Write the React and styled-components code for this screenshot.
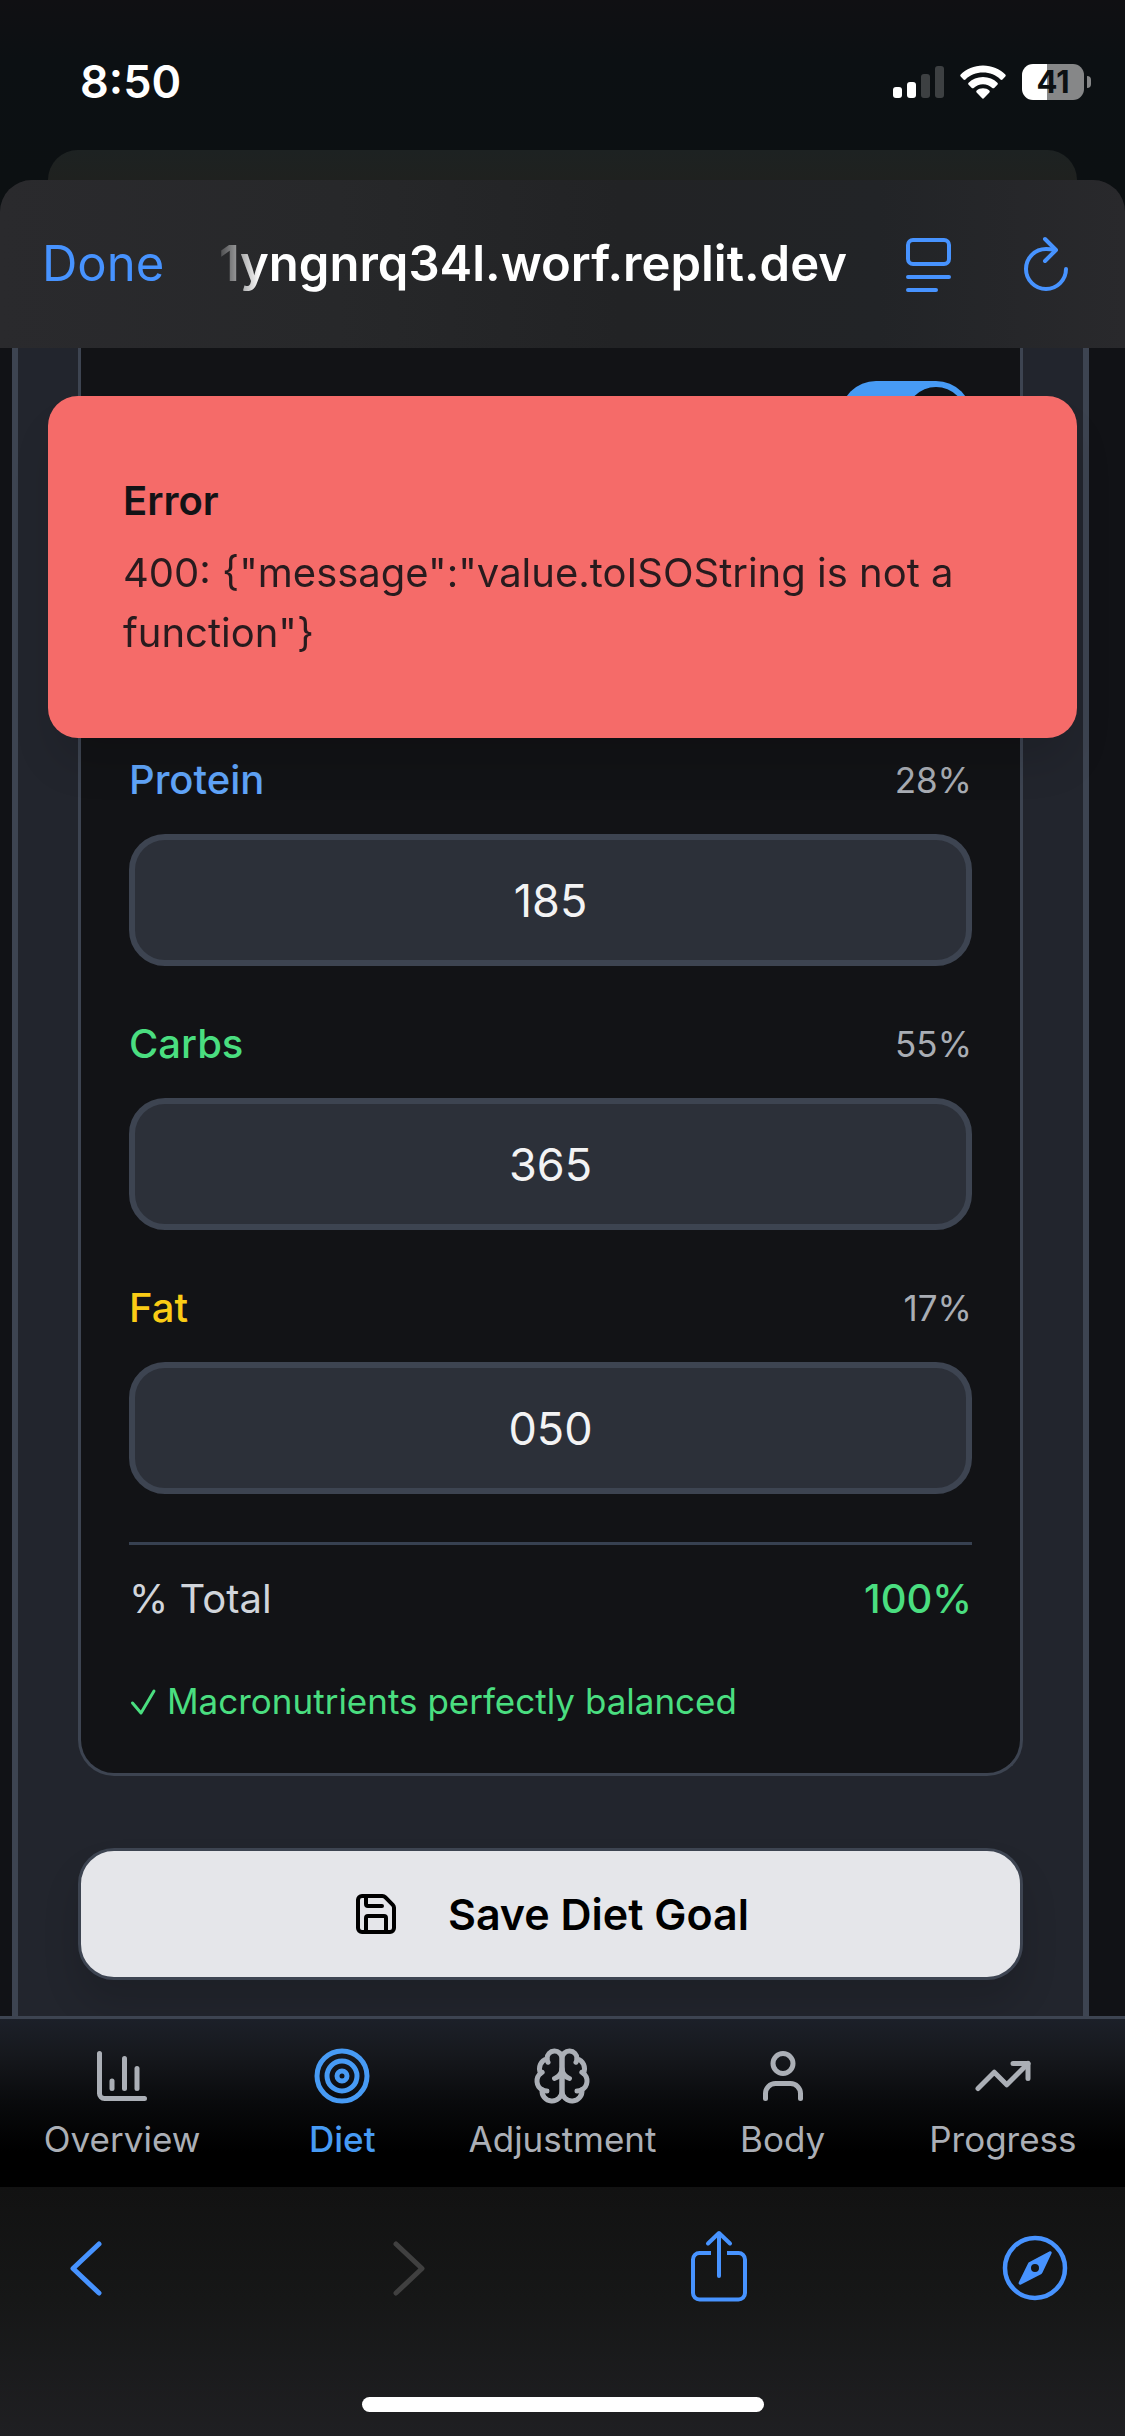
import React, { useState } from "react";
import styled, { createGlobalStyle } from "styled-components";
import { ChartColumn, Save, Target, TrendingUp, User } from "lucide-react";

const GlobalStyle = createGlobalStyle`
  *, *::before, *::after { box-sizing: border-box; }
  html, body { margin: 0; padding: 0; background: #0c1012; }
  body { font-family: Inter, "Liberation Sans", sans-serif; }
  button, input { font: inherit; margin: 0; }
`;

const Screen = styled.div`
  display: flex;
  flex-direction: column;
  min-height: 100vh;
  background: linear-gradient(#101013 0, #0c1013 60px, #0c1012 180px);
`;

const StatusBar = styled.header`
  display: flex;
  align-items: center;
  justify-content: space-between;
  height: 150px;
  padding: 14px 34px 0 80px;
  color: #fff;
`;

const Clock = styled.time`
  font-size: 45px;
  font-weight: 600;
  line-height: 60px;
`;

const StatusIcons = styled.div`
  display: flex;
  align-items: center;
  gap: 16px;
`;

const Battery = styled.div`
  display: flex;
  align-items: center;
  gap: 3px;

  &::after {
    content: "";
    width: 4px;
    height: 12px;
    border-radius: 0 4px 4px 0;
    background: #868788;
  }
`;

const BatteryLevel = styled.span`
  width: 62px;
  height: 36px;
  border-radius: 11px;
  background: linear-gradient(90deg, #fff 40%, #868788 40%);
  color: #0c1012;
  font-size: 31px;
  font-weight: 700;
  line-height: 36px;
  text-align: center;
`;

const BackSheet = styled.div`
  height: 30px;
  margin: 0 48px;
  border-radius: 30px 30px 0 0;
  background: linear-gradient(#1d2222, #1f211f);
`;

const Sheet = styled.section`
  display: flex;
  flex: 1;
  flex-direction: column;
  overflow: hidden;
  border-radius: 32px 32px 0 0;
  background: #111216;
`;

const AddressBar = styled.div`
  display: flex;
  align-items: center;
  height: 168px;
  padding: 0 56px 0 42px;
  background: linear-gradient(90deg, #2a2a2d 0%, #27282a 30%, #222325 55%, #222427 78%, #29292c 100%);
`;

const BarButton = styled.button`
  display: flex;
  align-items: center;
  justify-content: center;
  padding: 0;
  border: 0;
  background: none;
  color: ${(p) => (p.disabled ? "#404040" : "#4793ff")};
`;

const DoneButton = styled(BarButton)`
  font-size: 49px;
  line-height: 60px;
`;

const Address = styled.h1`
  flex: 1;
  margin: 0 0 0 48px;
  color: #fff;
  font-size: 49px;
  font-weight: 600;
  line-height: 60px;
  text-align: right;
  white-space: nowrap;
  mask-image: linear-gradient(90deg, transparent 0, #000 48px);
`;

const BarActions = styled.div`
  display: flex;
  gap: 72px;
  margin-left: 58px;
`;

const Viewport = styled.main`
  position: relative;
  flex: 1;
  overflow: hidden;
  padding: 0 36px 0 12px;
`;

const Panel = styled.form`
  display: flex;
  flex-direction: column;
  gap: 72px;
  height: 100%;
  padding: 0 60px 36px;
  border: solid #3d4451;
  border-width: 0 6px;
  background: #22252d;
`;

const Card = styled.section`
  display: flex;
  flex-direction: column;
  gap: 48px;
  padding: 33px 48px 48px;
  border: 3px solid #3d4451;
  border-top: 0;
  border-radius: 0 0 36px 36px;
  background: #121316;
`;

const SwitchRow = styled.div`
  display: flex;
  justify-content: flex-end;
  height: 321px;
`;

const Switch = styled.input`
  appearance: none;
  width: 132px;
  height: 72px;
  padding: 6px;
  border-radius: 36px;
  background: #479bf5;

  &::before {
    content: "";
    display: block;
    width: 60px;
    height: 60px;
    margin-left: auto;
    border-radius: 50%;
    background: #121316;
  }
`;

const Field = styled.div`
  display: flex;
  flex-direction: column;
  gap: 24px;
`;

const Row = styled.div`
  display: flex;
  align-items: center;
  justify-content: space-between;
  line-height: 60px;
`;

const MacroLabel = styled.label`
  color: ${(p) => p.$color};
  font-size: 40px;
  font-weight: 500;
`;

const Percent = styled.span`
  color: #a9adb4;
  font-size: 35px;
`;

const MacroInput = styled.input`
  width: 100%;
  height: 132px;
  padding: 0 36px;
  border: 6px solid #3d4451;
  border-radius: 36px;
  outline: 0;
  background: #2c3039;
  color: #f3f3f4;
  font-size: 45px;
  text-align: center;
`;

const Summary = styled.div`
  display: flex;
  flex-direction: column;
  gap: 48px;
  padding-top: 24px;
  border-top: 3px solid #374151;
`;

const Total = styled.span`
  color: ${(p) => p.$color};
  font-size: 40px;
  font-weight: ${(p) => p.$weight};
`;

const Balance = styled.p`
  display: flex;
  align-items: center;
  gap: 10px;
  margin: 0;
  color: #4ade80;
  font-size: 35px;
  line-height: 48px;
`;

const SaveButton = styled.button`
  display: flex;
  align-items: center;
  justify-content: center;
  gap: 48px;
  flex: none;
  height: 132px;
  border: 3px solid #3d4451;
  border-radius: 36px;
  background: #e5e6ea;
  color: #000;
  font-size: 43px;
  font-weight: 600;
  box-shadow: 0 24px 36px rgba(0, 0, 0, 0.14);
`;

const Toast = styled.div`
  position: absolute;
  top: 48px;
  right: 48px;
  left: 48px;
  display: flex;
  flex-direction: column;
  gap: 12px;
  padding: 75px;
  border-radius: 30px;
  background: #f56b69;
  color: #121316;
  font-size: 40px;
  line-height: 60px;
  box-shadow: 0 30px 45px -9px rgba(0, 0, 0, 0.14);
`;

const ToastTitle = styled.strong`
  font-weight: 600;
`;

const ToastText = styled.p`
  margin: 0;
  opacity: 0.9;
`;

const TabBar = styled.nav`
  display: grid;
  grid-template-columns: repeat(5, 1fr);
  padding: 27px 12px 24px;
  border-top: 3px solid #3d4451;
  background: linear-gradient(#1c2029 0, #16181d 36px, #090a0c 84px, #000 132px);
`;

const Tab = styled.a`
  display: flex;
  flex-direction: column;
  align-items: center;
  gap: 9px;
  color: ${(p) => (p.$active ? "#479bf5" : "#abafb6")};
  font-size: 35px;
  font-weight: ${(p) => (p.$active ? 500 : 400)};
  line-height: 48px;
  text-decoration: none;
`;

const BrowserBar = styled.footer`
  display: flex;
  flex-direction: column;
  align-items: center;
  gap: 84px;
  padding: 36px 0 24px;
  background: linear-gradient(#121212, #161717 45%, #1f1f22);
`;

const BrowserActions = styled.div`
  display: flex;
  justify-content: space-between;
  align-self: stretch;
  padding: 0 54px 0 50px;
`;

const HomeIndicator = styled.div`
  width: 402px;
  height: 15px;
  border-radius: 8px;
  background: #fff;
`;

function SignalIcon() {
  return (
    <svg width="51" height="32" viewBox="0 0 51 32" fill="#fff" aria-hidden="true">
      <rect x="0" y="21" width="9" height="11" rx="3" />
      <rect x="14" y="16" width="9" height="16" rx="3" />
      <rect x="28" y="8" width="9" height="24" rx="3" fill="#3d4042" />
      <rect x="42" y="0" width="9" height="32" rx="3" fill="#3d4042" />
    </svg>
  );
}

function WifiIcon() {
  return (
    <svg width="46" height="34" viewBox="0 0 46 34" fill="#fff" aria-hidden="true">
      <path d="M23 0.5C32 0.5 39.8 4 45.3 9.6c.6.6.6 1.4 0 2L42.500 14.500c-.6.6-1.400.6-2 0C36 10.200 29.900 7.600 23 7.600S10 10.200 5.500 14.500c-.6.6-1.400.6-2 0L.7 11.600c-.6-.6-.6-1.400 0-2C6.200 4 14 .5 23 .5z" />
      <path d="M23 12c5.700 0 10.700 2.200 14.400 5.700.6.6.6 1.400 0 2l-3.200 3.200c-.6.600-1.300.600-1.900.100A13.600 13.600 0 0 0 23 19.200c-3.600 0-6.800 1.400-9.300 3.800-.6.500-1.300.500-1.900-.1l-3.200-3.200c-.6-.6-.6-1.400 0-2C12.300 14.200 17.300 12 23 12z" />
      <path d="M23 23.200c2.500 0 4.700.9 6.300 2.300.6.500.6 1.300.1 1.900l-5.300 5.700c-.6.700-1.600.7-2.200 0l-5.300-5.700c-.5-.6-.5-1.400.1-1.900 1.600-1.400 3.800-2.300 6.300-2.300z" />
    </svg>
  );
}

function ReaderIcon() {
  return (
    <svg width="46" height="58" viewBox="0 0 46 58" fill="none" stroke="currentColor" strokeWidth="4" strokeLinecap="round" aria-hidden="true">
      <rect x="3" y="5" width="41" height="24" rx="5" />
      <path d="M3 42h41M3 55h28" />
    </svg>
  );
}

function ReloadIcon() {
  return (
    <svg width="46" height="58" viewBox="0 0 46 58" fill="none" stroke="currentColor" strokeWidth="4" strokeLinecap="round" strokeLinejoin="round" aria-hidden="true">
      <path d="M43 34a20 20 0 1 1-20-20c3 0 6 .3 9 1" />
      <path d="M22 4l11 11-11 11" />
    </svg>
  );
}

function BrainIcon() {
  return (
    <svg width="60" height="60" viewBox="0 0 24 24" fill="none" stroke="currentColor" strokeWidth="2" strokeLinecap="round" strokeLinejoin="round" aria-hidden="true">
      <path d="M12 5a3 3 0 1 0-5.997.125 4 4 0 0 0-2.526 5.770 4 4 0 0 0 .556 6.588A4 4 0 1 0 12 18Z" />
      <path d="M12 5a3 3 0 1 1 5.997.125 4 4 0 0 1 2.526 5.770 4 4 0 0 1-.556 6.588A4 4 0 1 1 12 18Z" />
      <path d="M15 13a4.500 4.500 0 0 1-3-4 4.500 4.500 0 0 1-3 4" />
      <path d="M17.599 6.500a3 3 0 0 0 .399-1.375M6.003 5.125A3 3 0 0 0 6.401 6.500M3.477 10.896a4 4 0 0 1 .585-.396M19.938 10.500a4 4 0 0 1 .585.396M6 18a4 4 0 0 1-1.967-.516M19.967 17.484A4 4 0 0 1 18 18" />
    </svg>
  );
}

function BackIcon() {
  return (
    <svg width="72" height="90" viewBox="0 0 72 90" fill="none" stroke="currentColor" strokeWidth="5" strokeLinecap="round" strokeLinejoin="round" aria-hidden="true">
      <path d="M49 21L23 45.500 49 70" />
    </svg>
  );
}

function ForwardIcon() {
  return (
    <svg width="72" height="90" viewBox="0 0 72 90" fill="none" stroke="currentColor" strokeWidth="5" strokeLinecap="round" strokeLinejoin="round" aria-hidden="true">
      <path d="M30 21L56 45.500 30 70" />
    </svg>
  );
}

function ShareIcon() {
  return (
    <svg width="72" height="90" viewBox="0 0 72 90" fill="none" stroke="currentColor" strokeWidth="4" strokeLinecap="round" strokeLinejoin="round" aria-hidden="true">
      <path d="M36 53V11M25 20.500L36 10l11 10.500" />
      <path strokeLinecap="butt" d="M28 30H16.500a6.500 6.500 0 0 0-6.500 6.500V70a6.500 6.500 0 0 0 6.500 6.500h39A6.500 6.500 0 0 0 62 70V36.500a6.500 6.500 0 0 0-6.500-6.500H44" />
    </svg>
  );
}

function CompassIcon() {
  return (
    <svg width="72" height="90" viewBox="0 0 72 90" fill="none" aria-hidden="true">
      <circle cx="36" cy="45" r="30" stroke="currentColor" strokeWidth="4.500" />
      <path fill="currentColor" fillRule="evenodd" d="M52.500 30.500L43.500 49.500c-.3.700-.8 1.300-1.500 1.700L22 61.500c-1.500.8-3-.7-2.200-2.200L29 40.500c.3-.7.800-1.200 1.500-1.500L50.300 28.600c1.600-.8 3 .4 2.200 1.900zM36 41a4 4 0 1 0 0 8 4 4 0 0 0 0-8z" />
    </svg>
  );
}

function CheckIcon() {
  return (
    <svg width="28" height="30" viewBox="0 0 28 30" fill="none" stroke="currentColor" strokeWidth="3" strokeLinecap="round" strokeLinejoin="round" aria-hidden="true">
      <path d="M3.500 17L12 27 25 5" />
    </svg>
  );
}

const macros = [
  { id: "protein", name: "Protein", color: "#60a5fa", value: "185", percent: "28%" },
  { id: "carbs", name: "Carbs", color: "#4ade80", value: "365", percent: "55%" },
  { id: "fat", name: "Fat", color: "#facc15", value: "050", percent: "17%" },
];

const tabs = [
  { name: "Overview", icon: <ChartColumn size={60} /> },
  { name: "Diet", icon: <Target size={60} />, active: true },
  { name: "Adjustment", icon: <BrainIcon /> },
  { name: "Body", icon: <User size={60} /> },
  { name: "Progress", icon: <TrendingUp size={60} /> },
];

function MacroField({ macro }) {
  const [value, setValue] = useState(macro.value);
  return (
    <Field>
      <Row>
        <MacroLabel htmlFor={macro.id} $color={macro.color}>{macro.name}</MacroLabel>
        <Percent>{macro.percent}</Percent>
      </Row>
      <MacroInput id={macro.id} inputMode="numeric" value={value} onChange={(e) => setValue(e.target.value)} />
    </Field>
  );
}

export default function App() {
  return (
    <Screen>
      <GlobalStyle />
      <StatusBar>
        <Clock>8:50</Clock>
        <StatusIcons>
          <SignalIcon />
          <WifiIcon />
          <Battery><BatteryLevel>41</BatteryLevel></Battery>
        </StatusIcons>
      </StatusBar>
      <BackSheet />
      <Sheet>
        <AddressBar>
          <DoneButton type="button">Done</DoneButton>
          <Address>1yngnrq34l.worf.replit.dev</Address>
          <BarActions>
            <BarButton type="button" aria-label="Reader view"><ReaderIcon /></BarButton>
            <BarButton type="button" aria-label="Reload"><ReloadIcon /></BarButton>
          </BarActions>
        </AddressBar>
        <Viewport>
          <Panel onSubmit={(e) => e.preventDefault()}>
            <Card>
              <SwitchRow>
                <Switch type="checkbox" role="switch" aria-label="Custom macros" defaultChecked />
              </SwitchRow>
              {macros.map((macro) => <MacroField key={macro.id} macro={macro} />)}
              <Summary>
                <Row>
                  <Total $color="#d1d5db" $weight={400}>% Total</Total>
                  <Total $color="#4ade80" $weight={500}>100%</Total>
                </Row>
                <Balance><CheckIcon />Macronutrients perfectly balanced</Balance>
              </Summary>
            </Card>
            <SaveButton type="submit"><Save size={48} />Save Diet Goal</SaveButton>
          </Panel>
          <Toast role="alert">
            <ToastTitle>Error</ToastTitle>
            <ToastText>{'400: {"message":"value.toISOString is not a function"}'}</ToastText>
          </Toast>
        </Viewport>
        <TabBar>
          {tabs.map((tab) => (
            <Tab key={tab.name} href={`#${tab.name.toLowerCase()}`} $active={tab.active}>
              {tab.icon}
              {tab.name}
            </Tab>
          ))}
        </TabBar>
        <BrowserBar>
          <BrowserActions>
            <BarButton type="button" aria-label="Back"><BackIcon /></BarButton>
            <BarButton type="button" aria-label="Forward" disabled><ForwardIcon /></BarButton>
            <BarButton type="button" aria-label="Share"><ShareIcon /></BarButton>
            <BarButton type="button" aria-label="Open in browser"><CompassIcon /></BarButton>
          </BrowserActions>
          <HomeIndicator />
        </BrowserBar>
      </Sheet>
    </Screen>
  );
}
